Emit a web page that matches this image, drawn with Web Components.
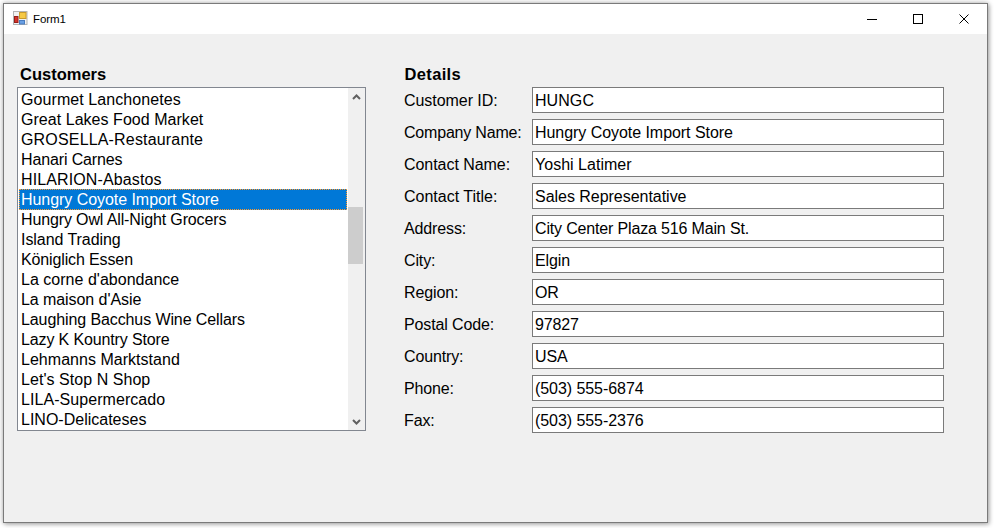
<!DOCTYPE html>
<html><head><meta charset="utf-8"><style>
html,body{margin:0;height:100%;background:#fff;overflow:hidden}
body{font-family:"Liberation Sans",Arial,sans-serif}
</style></head><body>
<form-window title-text="Form1">
  <customer-list slot="left" heading="Customers" selected="5" items="Gourmet Lanchonetes~.08|Great Lakes Food Market~.04|GROSELLA-Restaurante~.17|Hanari Carnes~-.13|HILARION-Abastos~.12|Hungry Coyote Import Store~-.05|Hungry Owl All-Night Grocers~-.13|Island Trading~-.06|Königlich Essen~-.13|La corne d'abondance~.02|La maison d'Asie~-.07|Laughing Bacchus Wine Cellars~-.1|Lazy K Kountry Store~-.13|Lehmanns Marktstand~.03|Let's Stop N Shop~.05|LILA-Supermercado~.06|LINO-Delicateses~0"></customer-list>
  <details-panel slot="right" heading="Details">
    <field-row label="Customer ID:" value="HUNGC" label-ls="-.05" value-ls=".07"></field-row>
    <field-row label="Company Name:" value="Hungry Coyote Import Store" label-ls="-.2" value-ls="-.05"></field-row>
    <field-row label="Contact Name:" value="Yoshi Latimer" label-ls="-.05" value-ls=".02"></field-row>
    <field-row label="Contact Title:" value="Sales Representative" label-ls="0" value-ls="-.03"></field-row>
    <field-row label="Address:" value="City Center Plaza 516 Main St." value-ls="-.16"></field-row>
    <field-row label="City:" value="Elgin"></field-row>
    <field-row label="Region:" value="OR"></field-row>
    <field-row label="Postal Code:" value="97827"></field-row>
    <field-row label="Country:" value="USA"></field-row>
    <field-row label="Phone:" value="(503) 555-6874" value-ls="-.06"></field-row>
    <field-row label="Fax:" value="(503) 555-2376" value-ls="-.06"></field-row>
  </details-panel>
</form-window>
<script>
function shadow(el,html){el.attachShadow({mode:'open'}).innerHTML=html;return el.shadowRoot}
customElements.define('form-window',class extends HTMLElement{connectedCallback(){
shadow(this,`<style>
:host{display:block;box-sizing:border-box;width:985px;height:520px;margin:3px 0 0 3px;border:1px solid #7a7a7a;background:#f0f0f0;box-shadow:0 0 5px rgba(0,0,0,.35),2px 2px 4px rgba(0,0,0,.15)}
.bar{height:30px;background:#fff;display:flex;align-items:center;padding-left:9px;color:#000}
.bar svg.app{margin-right:4px;width:16px;height:16px;flex:none}
.title{flex:1;font-size:11.5px;letter-spacing:-.1px}
.ctl{width:46px;height:30px;display:flex;align-items:center;justify-content:center}
.ctl svg{display:block}
.client{display:flex;padding:31px 0 0 13px}
.left{width:349px;flex:none}.right{margin-left:38px;flex:none}
</style>
<div class="bar">
<svg class="app" viewBox="0 0 16 16"><rect x=".5" y=".5" width="13.5" height="13" fill="#f2f2f2" stroke="#b4b4b4"/><rect x="6.5" y="1.5" width="6.5" height="6" fill="#f6c945" stroke="#c89a2c"/><rect x="1.5" y="5.5" width="3.5" height="6" fill="#d6332a" stroke="#96201a"/><rect x="6.5" y="9.5" width="5" height="3.5" fill="#6aa0e4" stroke="#4a7cc0"/></svg>
<span class="title">${this.getAttribute('title-text')}</span>
<div class="ctl"><svg width="10" height="10"><rect x="0" y="5" width="10" height="1" fill="#000"/></svg></div>
<div class="ctl"><svg width="10" height="10"><rect x=".5" y=".5" width="9" height="9" fill="none" stroke="#000"/></svg></div>
<div class="ctl"><svg width="10" height="10"><path d="M.5.5l9 9M9.5.5l-9 9" stroke="#000" stroke-width="1" fill="none"/></svg></div>
</div>
<div class="client"><div class="left"><slot name="left"></slot></div><div class="right"><slot name="right"></slot></div></div>`)}});
customElements.define('customer-list',class extends HTMLElement{connectedCallback(){
const items=this.getAttribute('items').split('|').map(s=>s.split('~')),sel=+this.getAttribute('selected');
shadow(this,`<style>
:host{display:block;font-family:"Liberation Sans",Arial,sans-serif;color:#000}
h2{margin:0 0 0 3px;font-size:16.5px;font-weight:bold;line-height:18px;height:22px;letter-spacing:0}
.box{box-sizing:border-box;height:344px;border:1px solid #828790;background:#fff;display:flex}
ul{list-style:none;margin:0;padding:2px 0 0 1px;flex:1;min-width:0;height:340px}
li{height:20px;line-height:20px;font-size:16px;padding-left:2px;white-space:nowrap;margin-right:1px}
li.sel{background:#0078d7;color:#fff;margin-top:-1px;height:21px;line-height:22px;outline:1px dotted #ff9a2e;outline-offset:-1px}
.sb{width:17px;flex:none;background:#f0f0f0;display:flex;flex-direction:column;align-items:stretch}
.arr{height:17px;display:flex;align-items:center;justify-content:center;flex:none}
.track{flex:1;display:flex;flex-direction:column}
.thumb{height:57px;margin-top:102px;background:#cdcdcd;margin-right:2px}
</style>
<h2>${this.getAttribute('heading')}</h2>
<div class="box"><ul>${items.map(([t,ls],i)=>`<li class="${i==sel?'sel':''}" style="letter-spacing:${ls}px">${t}</li>`).join('')}</ul>
<div class="sb"><div class="arr"><svg width="9" height="6"><path d="M1 5l3.5-3.5L8 5" fill="none" stroke="#606060" stroke-width="2"/></svg></div>
<div class="track"><div class="thumb"></div></div>
<div class="arr"><svg width="9" height="6"><path d="M1 1l3.5 3.5L8 1" fill="none" stroke="#606060" stroke-width="2"/></svg></div></div></div>`)}});
customElements.define('details-panel',class extends HTMLElement{connectedCallback(){
shadow(this,`<style>
:host{display:block;font-family:"Liberation Sans",Arial,sans-serif;color:#000}
h2{margin:0 0 0 .5px;font-size:16.5px;font-weight:bold;line-height:18px;height:22px;letter-spacing:.35px}
.rows{display:flex;flex-direction:column;gap:6px}
</style><h2>${this.getAttribute('heading')}</h2><div class="rows"><slot></slot></div>`)}});
customElements.define('field-row',class extends HTMLElement{connectedCallback(){
const l=this.getAttribute('label-ls')||'-.13',v=this.getAttribute('value-ls')||'-.13';
shadow(this,`<style>
:host{display:flex;align-items:center;height:26px;font-size:16px}
label{width:128px;flex:none;white-space:nowrap;padding-top:2px;box-sizing:border-box;letter-spacing:${l}px}
.tb{box-sizing:border-box;width:412px;height:26px;border:1px solid #7a7a7a;background:#fff;padding:1px 0 0 2px;line-height:24px;white-space:nowrap;letter-spacing:${v}px}
</style><label>${this.getAttribute('label')}</label><div class="tb">${this.getAttribute('value')}</div>`)}});
</script></body></html>
